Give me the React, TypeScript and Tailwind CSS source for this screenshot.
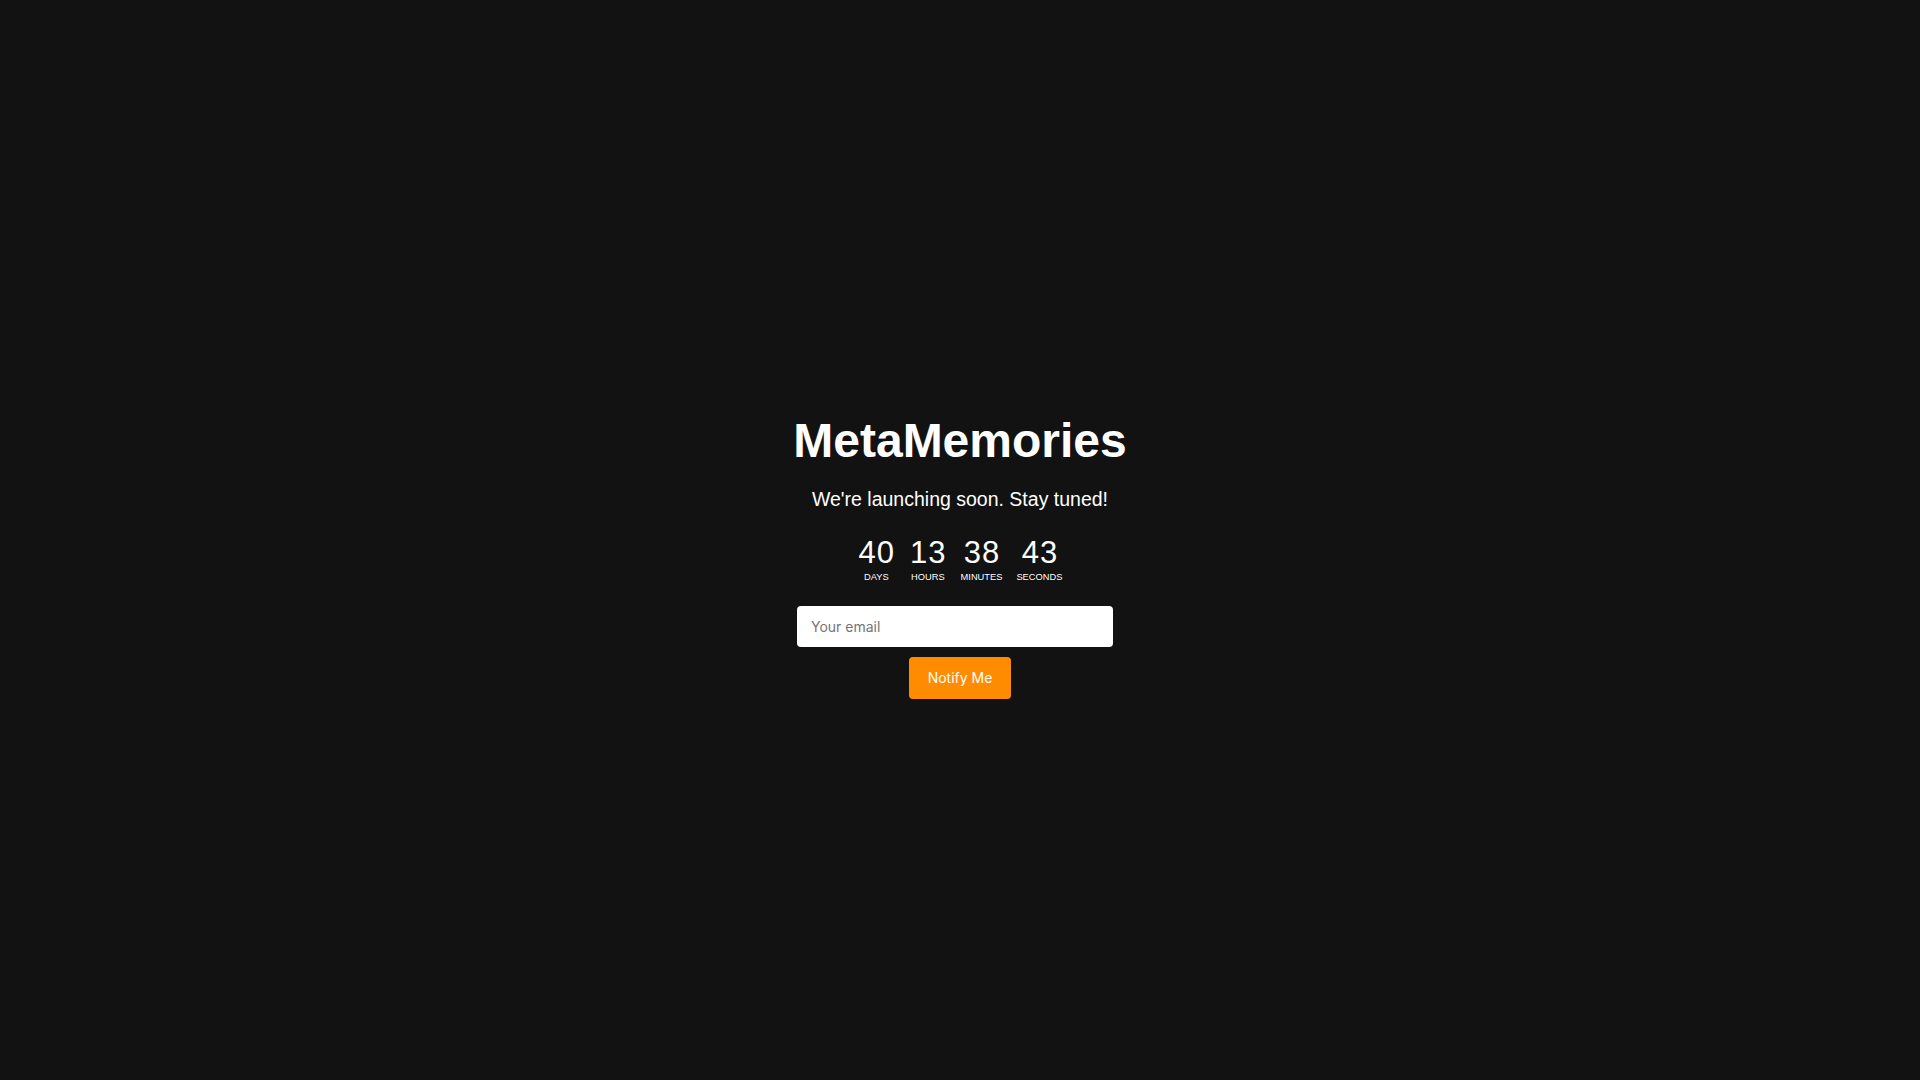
import React from "react";

const units = [
  { value: "40", label: "Days" },
  { value: "13", label: "Hours" },
  { value: "38", label: "Minutes" },
  { value: "43", label: "Seconds" },
];

export default function App() {
  return (
    <div className="min-h-screen w-full bg-[#121212] flex flex-col items-center justify-center pt-[32px] text-white font-['Liberation_Sans',Arial,sans-serif]">
      <h1 className="text-5xl leading-[56px] font-bold">MetaMemories</h1>
      <p className="mt-4 text-[19.5px] leading-7">We're launching soon. Stay tuned!</p>

      <div className="mt-6 flex gap-[14px]">
        {units.map((u) => (
          <div key={u.label} className="flex flex-col items-center">
            <span className="text-[31px] leading-8 tracking-[1px] pl-[1px]">{u.value}</span>
            <span className="mt-[2px] text-[9.3px] leading-3 uppercase">{u.label}</span>
          </div>
        ))}
      </div>

      <form
        className="mt-[23px] flex flex-col items-center gap-[10px] font-['Inter','Noto_Sans',sans-serif]"
        onSubmit={(e) => e.preventDefault()}
      >
        <input
          type="email"
          placeholder="Your email"
          className="w-[316px] h-[41px] mr-[10px] rounded bg-white px-[14px] text-sm text-gray-800 placeholder:text-[#757575] outline-none"
        />
        <button
          type="submit"
          className="h-[42px] px-[19px] rounded bg-[#ff8c00] text-sm font-normal text-white"
        >
          Notify Me
        </button>
      </form>
    </div>
  );
}
